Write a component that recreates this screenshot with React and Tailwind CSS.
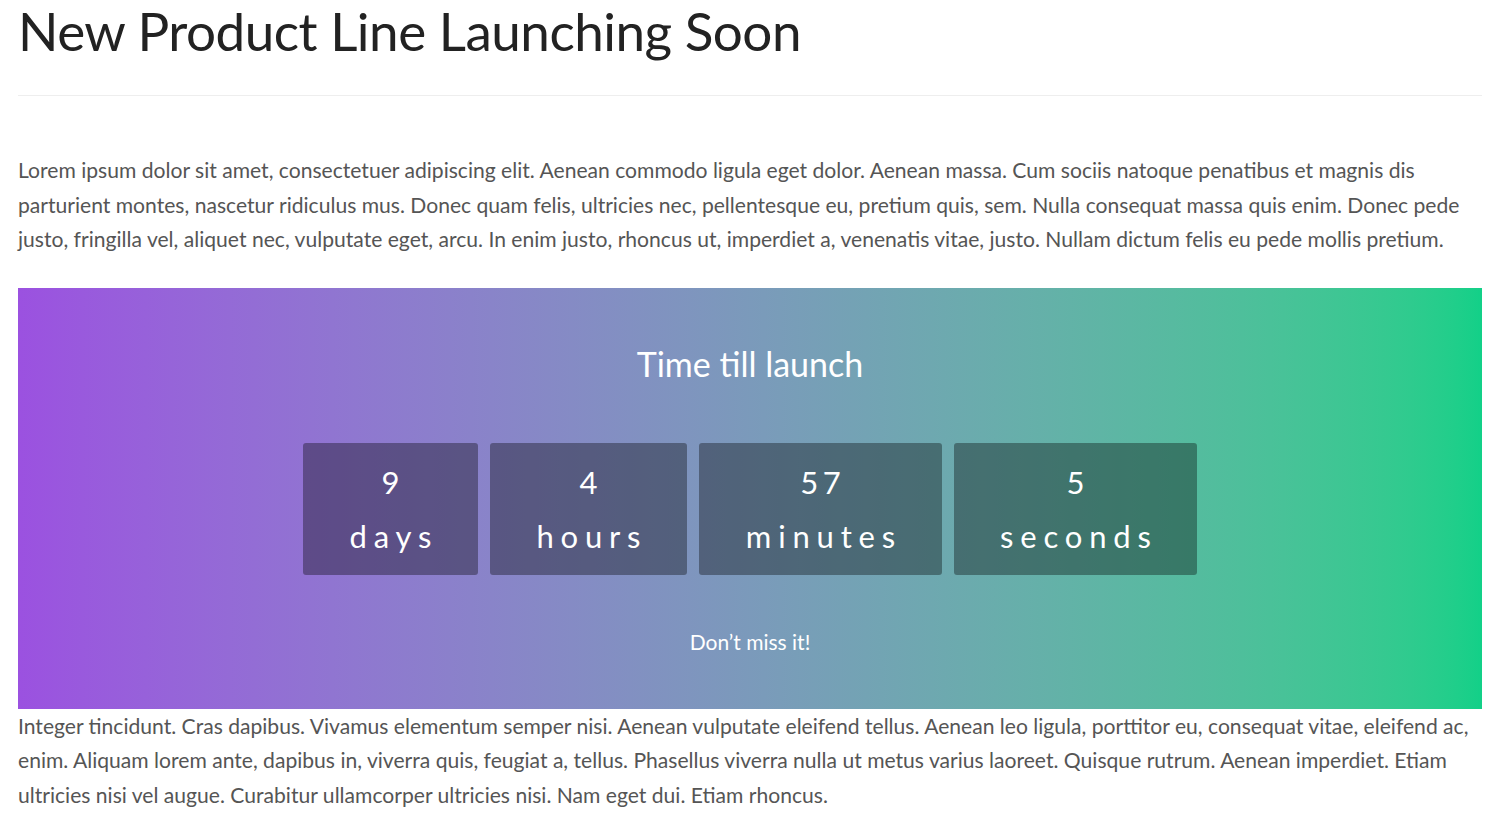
export default function App() {
  const units = [
    { n: "9", l: "days", w: "w-[175px]" },
    { n: "4", l: "hours", w: "w-[197px]" },
    { n: "57", l: "minutes", w: "w-[243px]" },
    { n: "5", l: "seconds", w: "w-[243px]" },
  ];
  return (
    <div className="bg-white px-[18px] font-['Lato',sans-serif] text-[#555]">
      <h1 className="h-[66px] text-[53px] leading-[60px] pt-[1px] text-[#222] tracking-[-0.5px]">
        New Product Line Launching Soon
      </h1>
      <div className="mt-[29px] h-px bg-[#eeeeee]" />
      <p className="mt-[57px] text-[21.1px] leading-[34.5px] whitespace-nowrap">
        Lorem ipsum dolor sit amet, consectetuer adipiscing elit. Aenean commodo ligula eget dolor. Aenean massa. Cum sociis natoque penatibus et magnis dis<br />
        parturient montes, nascetur ridiculus mus. Donec quam felis, ultricies nec, pellentesque eu, pretium quis, sem. Nulla consequat massa quis enim. Donec pede<br />
        justo, fringilla vel, aliquet nec, vulputate eget, arcu. In enim justo, rhoncus ut, imperdiet a, venenatis vitae, justo. Nullam dictum felis eu pede mollis pretium.
      </p>
      <div className="mt-[31px] h-[421px] bg-gradient-to-r from-[#9b51e0] to-[#12d088] flex flex-col items-center text-white">
        <div className="mt-[55px] h-[42px] text-[34px] leading-[42px]">Time till launch</div>
        <div className="mt-[58px] flex gap-[12px]">
          {units.map((u) => (
            <div key={u.l} className={`${u.w} h-[132px] rounded-[3px] bg-black/35 flex flex-col items-center pt-[19px]`}>
              <div className="text-[31px] leading-[40px] tracking-[0.15em] pl-[0.15em]">{u.n}</div>
              <div className="mt-[14px] text-[31px] leading-[40px] tracking-[0.22em] pl-[0.22em]">{u.l}</div>
            </div>
          ))}
        </div>
        <div className="mt-[53px] text-[21px] leading-[28px]">Don’t miss it!</div>
      </div>
      <p className="text-[21.1px] leading-[34.5px] whitespace-nowrap">
        Integer tincidunt. Cras dapibus. Vivamus elementum semper nisi. Aenean vulputate eleifend tellus. Aenean leo ligula, porttitor eu, consequat vitae, eleifend ac,<br />
        enim. Aliquam lorem ante, dapibus in, viverra quis, feugiat a, tellus. Phasellus viverra nulla ut metus varius laoreet. Quisque rutrum. Aenean imperdiet. Etiam<br />
        ultricies nisi vel augue. Curabitur ullamcorper ultricies nisi. Nam eget dui. Etiam rhoncus.
      </p>
    </div>
  );
}
